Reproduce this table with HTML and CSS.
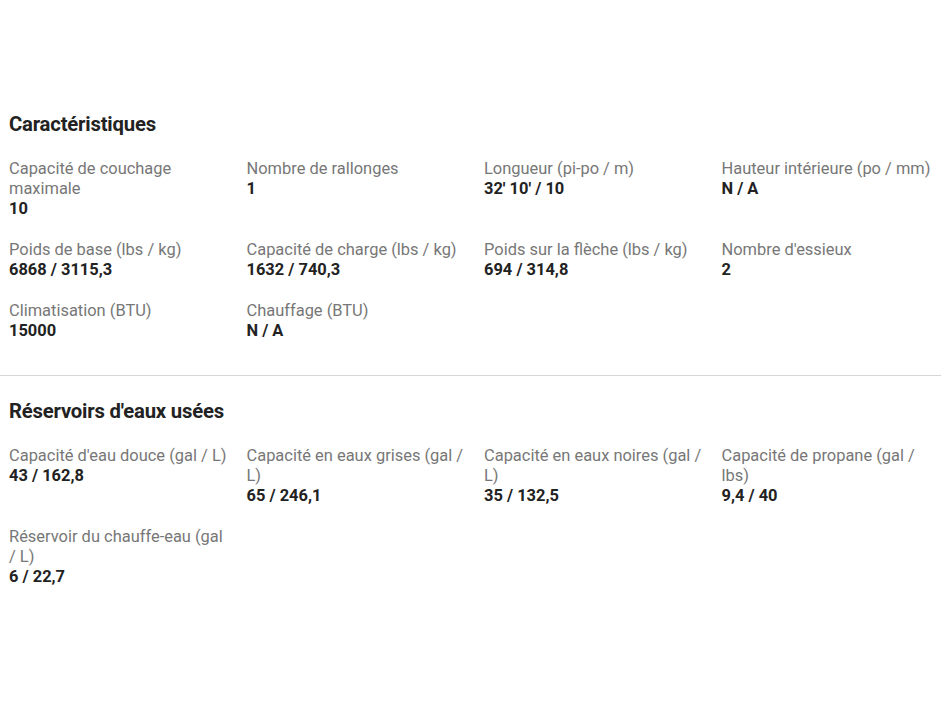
FILE: index.html
```html
<!DOCTYPE html>
<html lang="fr">
<head>
<meta charset="utf-8">
<title>Caractéristiques</title>
<link rel="stylesheet" href="styles.css">
</head>
<body>
<main class="specs">
  <section class="section section-first">
    <h2 class="section-title">Caractéristiques</h2>
    <div class="grid">
      <div class="item"><div class="label">Capacité de couchage maximale</div><div class="value">10</div></div>
      <div class="item"><div class="label">Nombre de rallonges</div><div class="value">1</div></div>
      <div class="item"><div class="label">Longueur (pi-po / m)</div><div class="value">32' 10' / 10</div></div>
      <div class="item"><div class="label">Hauteur intérieure (po / mm)</div><div class="value">N / A</div></div>
      <div class="item"><div class="label">Poids de base (lbs / kg)</div><div class="value">6868 / 3115,3</div></div>
      <div class="item"><div class="label">Capacité de charge (lbs / kg)</div><div class="value">1632 / 740,3</div></div>
      <div class="item"><div class="label">Poids sur la flèche (lbs / kg)</div><div class="value">694 / 314,8</div></div>
      <div class="item"><div class="label">Nombre d'essieux</div><div class="value">2</div></div>
      <div class="item"><div class="label">Climatisation (BTU)</div><div class="value">15000</div></div>
      <div class="item"><div class="label">Chauffage (BTU)</div><div class="value">N / A</div></div>
    </div>
  </section>
  <section class="section section-second">
    <h2 class="section-title">Réservoirs d'eaux usées</h2>
    <div class="grid">
      <div class="item"><div class="label">Capacité d'eau douce (gal / L)</div><div class="value">43 / 162,8</div></div>
      <div class="item"><div class="label">Capacité en eaux grises (gal / L)</div><div class="value">65 / 246,1</div></div>
      <div class="item"><div class="label">Capacité en eaux noires (gal / L)</div><div class="value">35 / 132,5</div></div>
      <div class="item"><div class="label">Capacité de propane (gal / lbs)</div><div class="value">9,4 / 40</div></div>
      <div class="item"><div class="label">Réservoir du chauffe-eau (gal / L)</div><div class="value">6 / 22,7</div></div>
    </div>
  </section>
</main>
</body>
</html>
```
FILE: styles.css
```css
html, body {
  margin: 0;
  padding: 0;
  background: #ffffff;
  overflow-x: hidden;
}
body {
  font-family: Roboto, "Noto Sans", Arial, sans-serif;
  color: #222222;
}
.specs {
  width: 960px;
}
.section {
  padding: 0 0 0 9px;
}
.section-first {
  padding-top: 112px;
  padding-bottom: 34px;
}
.section-second {
  border-top: 1px solid #d6d6d6;
  width: 941px;
  box-sizing: border-box;
  padding-top: 23px;
}
.section-title {
  margin: 0 0 23px 0;
  font-size: 20.3px;
  line-height: 24px;
  font-weight: 700;
  color: #222222;
  letter-spacing: -0.2px;
}
.grid {
  display: grid;
  grid-template-columns: repeat(4, 221px);
  column-gap: 16.5px;
  row-gap: 21px;
  width: 951px;
}
.item {
  font-size: 16.45px;
  line-height: 20px;
}
.label {
  color: #777777;
  font-weight: 400;
}
.value {
  color: #222222;
  font-weight: 700;
}
```
